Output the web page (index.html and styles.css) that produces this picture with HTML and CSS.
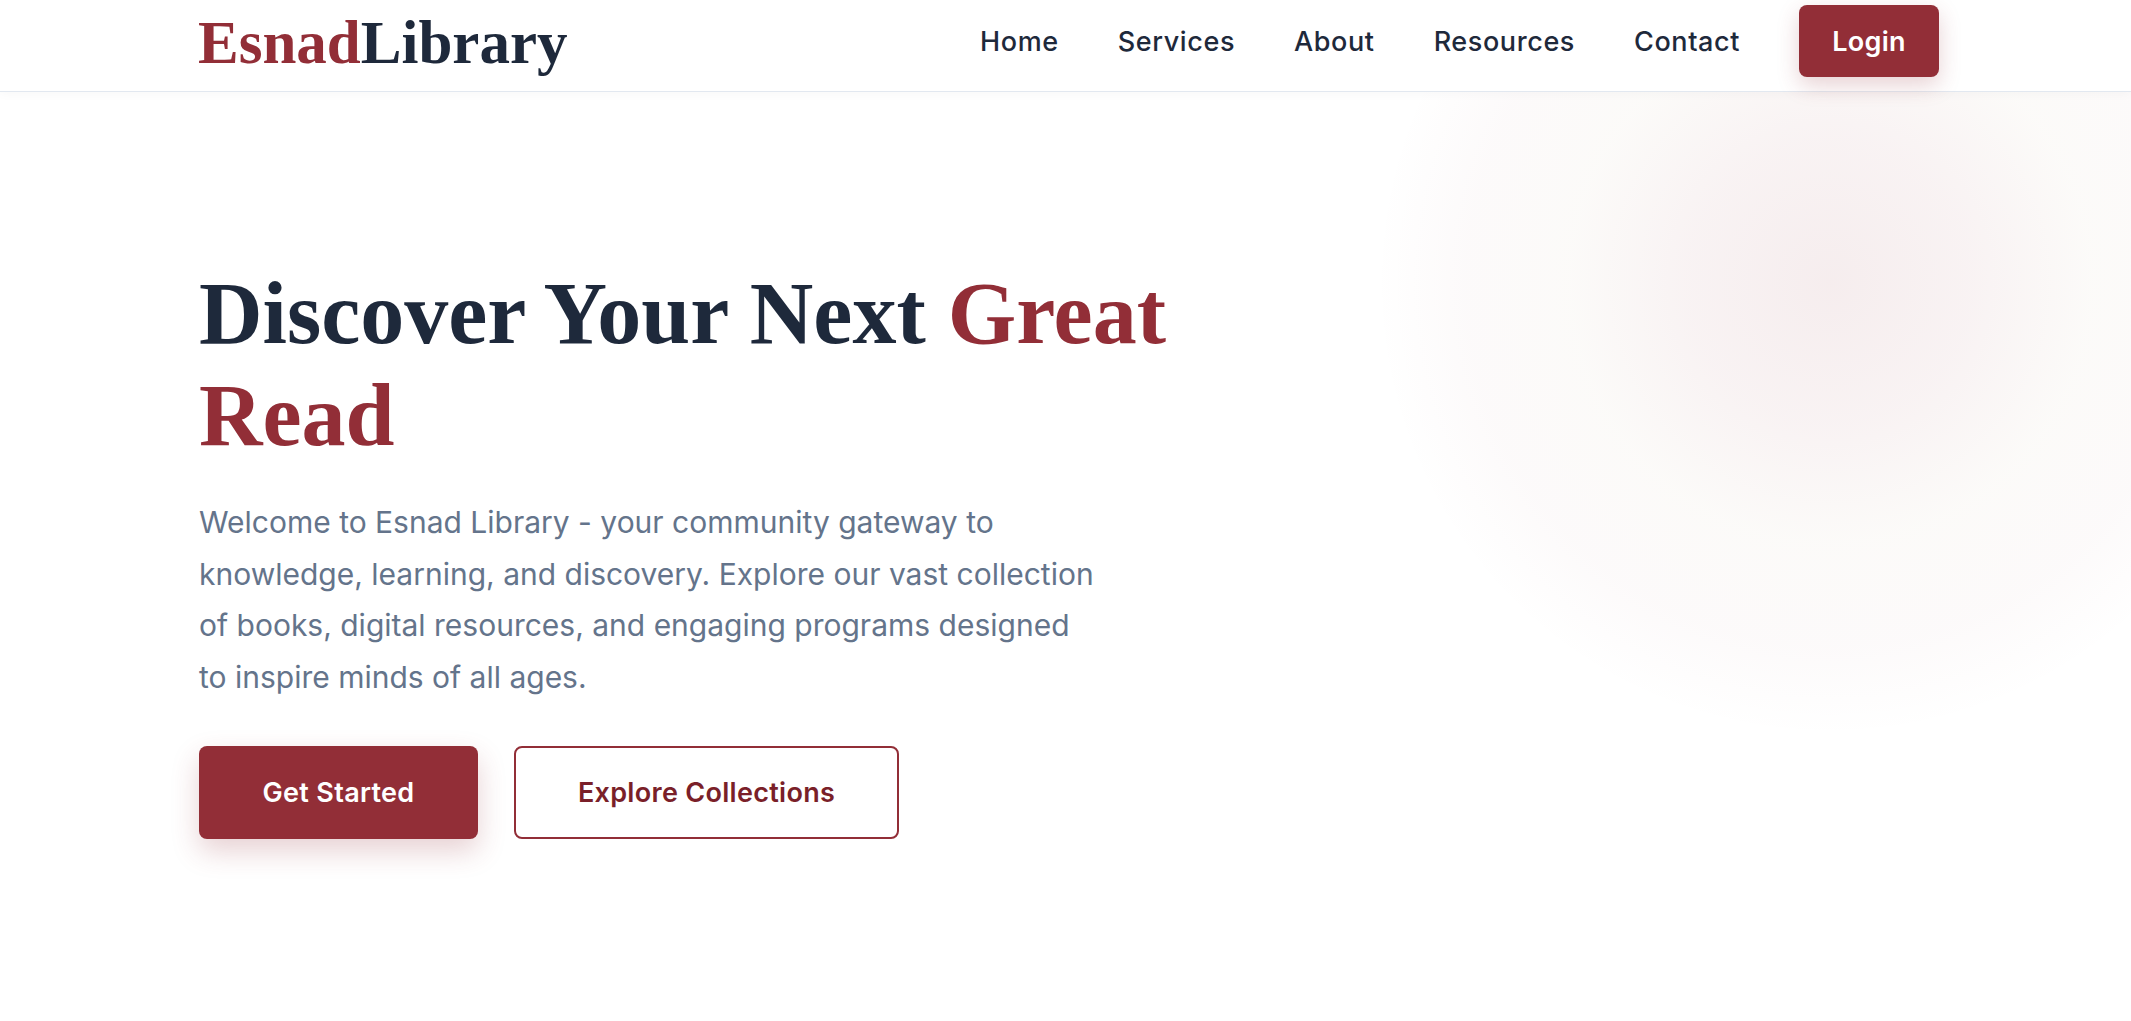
FILE: index.html
```html
<!DOCTYPE html>
<html lang="en">
<head>
<meta charset="utf-8">
<title>Esnad Library</title>
<link rel="stylesheet" href="styles.css">
</head>
<body>
<header class="nav">
  <div class="nav-inner">
    <a class="logo" href="#"><span class="logo-accent">Esnad</span>Library</a>
    <nav class="links">
      <a href="#" class="link">Home</a>
      <a href="#" class="link">Services</a>
      <a href="#" class="link">About</a>
      <a href="#" class="link">Resources</a>
      <a href="#" class="link">Contact</a>
      <a href="#" class="login">Login</a>
    </nav>
  </div>
</header>
<main class="hero">
  <div class="blob"></div>
  <div class="hero-inner">
    <h1 class="title">Discover Your Next <span class="accent">Great Read</span></h1>
    <p class="lead">Welcome to Esnad Library - your community gateway to knowledge, learning, and discovery. Explore our vast collection of books, digital resources, and engaging programs designed to inspire minds of all ages.</p>
    <div class="actions">
      <a href="#" class="btn btn-primary">Get Started</a>
      <a href="#" class="btn btn-outline">Explore Collections</a>
    </div>
  </div>
</main>
</body>
</html>
```
FILE: styles.css
```css
* { box-sizing: border-box; }
html, body { margin: 0; padding: 0; }
body {
  background: #ffffff;
  font-family: Inter, "Noto Sans", sans-serif;
  color: #1e293b;
  min-height: 1021px;
  overflow: hidden;
}
a { text-decoration: none; }

.nav {
  background: #fff;
  border-bottom: 1px solid #e2e8f0;
  box-shadow: 0 2px 10px rgba(15, 23, 42, 0.03);
  position: relative;
  z-index: 2;
}
.nav-inner {
  display: flex;
  align-items: center;
  justify-content: space-between;
  padding: 5px 192px 14px 198px;
  height: 91px;
}
.logo {
  font-family: "Liberation Serif", "Times New Roman", serif;
  font-weight: 700;
  font-size: 61px;
  line-height: 72px;
  color: #1e293b;
  margin-top: 4px;
}
.logo-accent { color: #922e37; }

.links {
  display: flex;
  align-items: center;
  gap: 59px;
}
.link {
  font-size: 27px;
  font-weight: 500;
  letter-spacing: 0.6px;
  color: #1e293b;
}
.login {
  display: flex;
  align-items: center;
  justify-content: center;
  width: 140px;
  height: 72px;
  border-radius: 8px;
  background: #922e37;
  color: #fff;
  font-size: 27px;
  font-weight: 600;
  letter-spacing: 0.3px;
  box-shadow: 0 8px 22px rgba(146, 46, 55, 0.22);
}

.hero {
  position: relative;
  overflow: hidden;
  min-height: 929px;
}
.blob {
  position: absolute;
  left: 1370px;
  top: -270px;
  width: 920px;
  height: 920px;
  border-radius: 50%;
  background: radial-gradient(circle at center,
    rgba(146, 46, 55, 0.085) 0%,
    rgba(146, 46, 55, 0.06) 22%,
    rgba(180, 150, 110, 0.045) 40%,
    rgba(146, 46, 55, 0.025) 56%,
    rgba(146, 46, 55, 0.0) 70%);
}
.hero-inner {
  position: relative;
  padding: 171px 192px 0 199px;
}
.title {
  margin: 0;
  max-width: 1100px;
  font-family: "Liberation Serif", "Times New Roman", serif;
  font-weight: 700;
  font-size: 88px;
  line-height: 102px;
  color: #1e293b;
}
.accent { color: #922e37; }
.lead {
  margin: 30px 0 0;
  max-width: 900px;
  font-size: 30px;
  line-height: 51.5px;
  color: #64748b;
}
.actions {
  display: flex;
  gap: 36px;
  margin-top: 43px;
}
.btn {
  display: flex;
  align-items: center;
  justify-content: center;
  height: 93px;
  border-radius: 8px;
  font-size: 27px;
  font-weight: 600;
  letter-spacing: 0.3px;
}
.btn-primary {
  width: 279px;
  background: #922e37;
  color: #fff;
  box-shadow: 0 12px 28px rgba(146, 46, 55, 0.22);
}
.btn-outline {
  width: 385px;
  border: 2.5px solid #922e37;
  color: #7a1f29;
  background: #fff;
}
```
